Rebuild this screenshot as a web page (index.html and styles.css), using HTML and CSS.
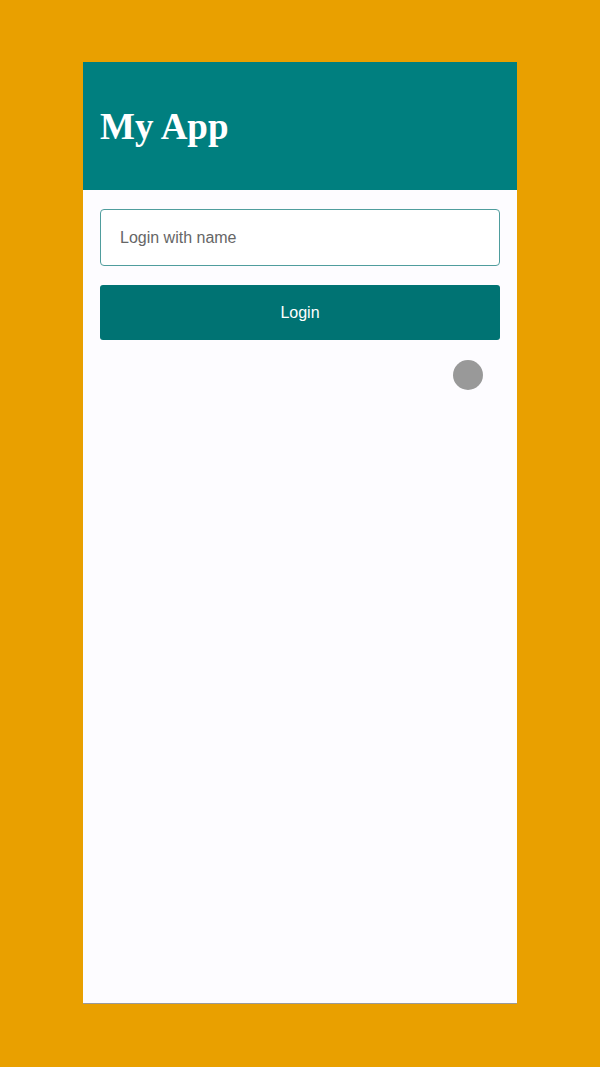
FILE: index.html
```html
<!DOCTYPE html>
<html lang="en">
<head>
<meta charset="utf-8">
<title>My App</title>
<link rel="stylesheet" href="styles.css">
</head>
<body>
  <div class="phone">
    <header class="app-header">
      <h1 class="app-title">My App</h1>
    </header>
    <main class="content">
      <input class="name-input" type="text" placeholder="Login with name">
      <button class="login-btn" type="button">Login</button>
      <div class="spinner-row">
        <div class="spinner"></div>
      </div>
    </main>
  </div>
</body>
</html>
```

FILE: styles.css
```css
html, body {
  margin: 0;
  padding: 0;
}
body {
  background: #e9a000;
  height: 1067px;
  display: flex;
  justify-content: center;
  align-items: flex-start;
  padding-top: 62px;
  box-sizing: border-box;
}
.phone {
  width: 434px;
  height: 942px;
  background: #fdfcff;
  border-bottom: 1px solid #9a9a9a;
  box-sizing: border-box;
  display: flex;
  flex-direction: column;
}
.app-header {
  background: #007f7f;
  height: 128px;
  padding: 0 17px;
  display: flex;
  align-items: center;
  box-sizing: border-box;
}
.app-title {
  margin: 0;
  color: #ffffff;
  font-family: "Liberation Serif", "Times New Roman", serif;
  font-weight: bold;
  font-size: 37px;
  line-height: 1;
}
.content {
  padding: 19px 17px 0;
  display: flex;
  flex-direction: column;
}
.name-input {
  height: 57px;
  box-sizing: border-box;
  border: 1.5px solid #4f9d9d;
  border-radius: 4px;
  background: #ffffff;
  padding: 0 19px;
  font-family: "Liberation Sans", Arial, sans-serif;
  font-size: 16px;
  color: #333;
  outline: none;
}
.name-input::placeholder {
  color: #666666;
}
.login-btn {
  margin-top: 19px;
  height: 55px;
  border: none;
  border-radius: 3px;
  background: #007373;
  color: #ffffff;
  font-family: "Liberation Sans", Arial, sans-serif;
  font-size: 16px;
  cursor: pointer;
}
.spinner-row {
  margin-top: 20px;
  display: flex;
  justify-content: flex-end;
  padding-right: 17px;
}
.spinner {
  width: 30px;
  height: 30px;
  border-radius: 50%;
  background: #999999;
}
```
